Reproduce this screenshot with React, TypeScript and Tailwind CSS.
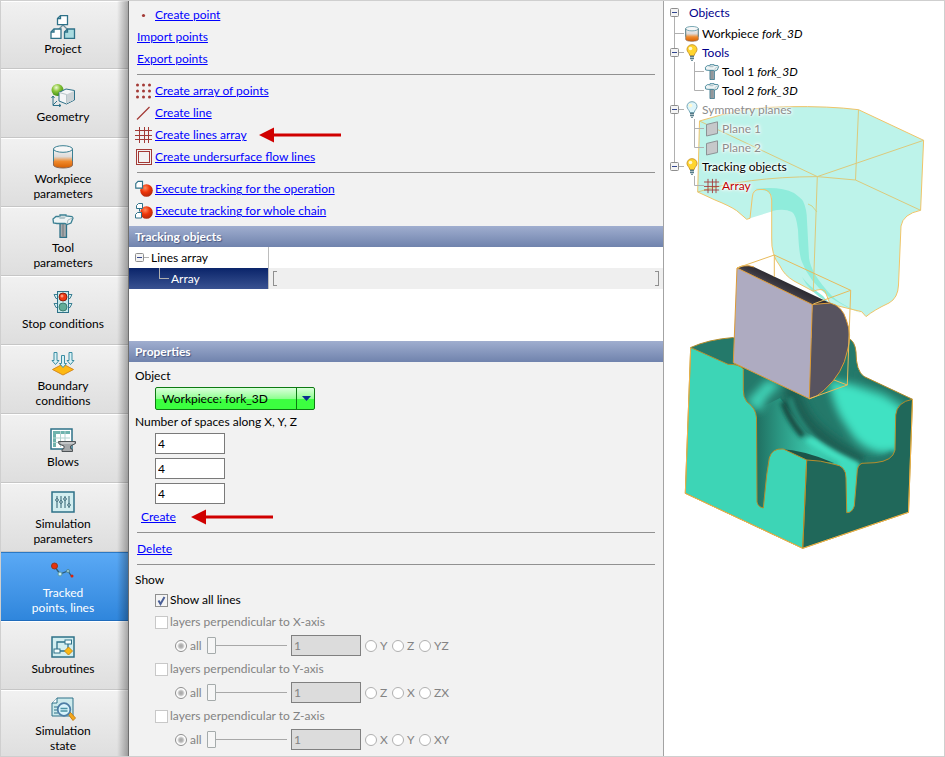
import { useState } from 'react'
import type { ReactNode } from 'react'

const PAGE = 'M1 3.5 4 .5h6v9H1z'

function ProjectIcon() {
  return (
    <svg width="26" height="24" viewBox="0 0 26 24" fill="none" stroke="#2e7188" strokeWidth="1.3">
      <path d="M13 10 8 15M13 10l5 5" stroke="#6d8f9b" />
      <path d="M7.5 3.5 10.500 .7h7v9h-10z" fill="#fff" />
      <path d="M10.500 .7v3h-3" />
      <path d="M1 17 4 14h7v9.300H1z" fill="#fff" />
      <path d="M4 14v3H1" />
      <path d="M14.500 17l3-3h7v9.300h-10z" fill="#a9dbe0" />
      <path d="M17.500 14v3h-3" />
    </svg>
  )
}

function GeometryIcon() {
  return (
    <svg width="24" height="24" viewBox="0 0 24 24" fill="none">
      <defs>
        <radialGradient id="geoBall" cx=".4" cy=".3" r=".7">
          <stop offset="0" stopColor="#f0fbd8" />
          <stop offset=".45" stopColor="#8cc63c" />
          <stop offset="1" stopColor="#3f8f13" />
        </radialGradient>
      </defs>
      <circle cx="6.500" cy="7" r="6" fill="url(#geoBall)" />
      <path d="M8 9.500 15 6l8.500 1.500V17l-8 4L8 18z" fill="#f4f6f7" stroke="#2e7188" />
      <path d="M15.500 11.500 23 8v9l-7.500 3.500z" fill="#ccd3d6" />
      <path d="M8 9.500l7.500 2V21" stroke="#b9c5c9" />
      <path d="M2 13v9.500h8M.5 15 2 13l1.500 2M8 21l2 1.500-2 1.500M2 22l4-4" stroke="#2e7188" />
    </svg>
  )
}

function CylinderIcon({ size = 24 }: { size?: number }) {
  return (
    <svg width={size} height={size} viewBox="0 0 24 24">
      <defs>
        <linearGradient id="cylBody" x1="0" y1="0" x2="0" y2="1">
          <stop offset="0" stopColor="#f4f4f4" />
          <stop offset=".4" stopColor="#dedad8" />
          <stop offset=".65" stopColor="#f08a2c" />
          <stop offset="1" stopColor="#d65f00" />
        </linearGradient>
      </defs>
      <path d="M2.500 4v16c0 4 19 4 19 0V4z" fill="url(#cylBody)" stroke="#8a6a58" />
      <path d="M2.500 16V4M21.500 16V4" stroke="#3b8093" />
      <ellipse cx="12" cy="4" rx="9.500" ry="3.300" fill="#f7f7f7" stroke="#3b8093" />
    </svg>
  )
}

function HammerIcon({ size = 24 }: { size?: number }) {
  return (
    <svg width={size} height={size} viewBox="0 0 24 24">
      <path d="M9 9h6.500v14.500H9z" fill="#a6a9ab" stroke="#2e7188" strokeWidth="1.300" />
      <path d="M12 10v13" stroke="#8a8f92" strokeWidth="2" />
      <path d="M2 5 5 2.500h4V1h6v1l6 .5 1 1.500-2 5-4 1.500-2-1H6L2.500 9z" fill="#eef4f5" stroke="#3b8093" strokeWidth="1.300" />
      <path d="M8 2.500h7l-1.500 2.500h-5z" fill="#b3c6cb" />
      <path d="M16 10l1-4 4.500-2" fill="none" stroke="#a9bcc1" />
    </svg>
  )
}

function TrafficIcon() {
  return (
    <svg width="24" height="24" viewBox="0 0 24 24">
      <path d="M6 4.500H3l2 4h1M6 13.500H3l2 4h1M18 4.500h3l-2 4h-1M18 13.500h3l-2 4h-1" fill="#d8eef0" stroke="#3b8093" />
      <rect x="6.500" y="1.500" width="11" height="21" fill="#c6e9ea" stroke="#2e7188" />
      <circle cx="12" cy="7" r="4" fill="#ee3a14" stroke="#8e2010" />
      <circle cx="11" cy="6" r="1.500" fill="#ff9b7c" />
      <circle cx="12" cy="17" r="4" fill="#62ad97" stroke="#3d7e71" />
    </svg>
  )
}

function BoundaryIcon() {
  return (
    <svg width="24" height="24" viewBox="0 0 24 24">
      <path d="M1.500 17.500 12 12l10.500 5.500L12 23z" fill="#fdb913" stroke="#d88a1c" />
      <g fill="#d9f1f5" stroke="#3b8da3">
        <path d="M3 .5h3v8h2L4.500 12.500 1 8.500h2z" />
        <path d="M18 .5h3v8h2l-3.500 4L16 8.500h2z" />
        <path d="M10.500 3.500h3v8h2L12 15.500l-3.500-4h2z" />
      </g>
    </svg>
  )
}

function BlowsIcon() {
  return (
    <svg width="26" height="24" viewBox="0 0 26 24">
      <rect x="1" y="1" width="21" height="20" fill="#fff" stroke="#2e7188" strokeWidth="1.500" />
      <path d="M3 3h17v3H3zM3 6h3v13H3z" fill="#6fb3ad" />
      <path d="M3 10h17M3 14.500h17M10.500 3v16M15 3v16" stroke="#b3d3d0" />
      <path d="M8.500 13.500h17v2l-5 2.500v2.500l2 1v2H12v-2l2-1V18l-5-2z" fill="#a5a8aa" stroke="#4e5356" />
      <path d="M11 15h13" stroke="#e2e4e5" />
    </svg>
  )
}

function SlidersIcon() {
  return (
    <svg width="24" height="22" viewBox="0 0 24 22">
      <rect x="1" y="1" width="22" height="20" fill="#d3eef0" stroke="#2e7188" strokeWidth="1.500" />
      <path d="M6 5v12M10 5v12M14 5v12M18 5v12" stroke="#2f6070" />
      <g fill="#e9fafa" stroke="#2f6070">
        <circle cx="6" cy="9" r="1.300" />
        <circle cx="10" cy="11" r="1.300" />
        <circle cx="14" cy="8" r="1.300" />
        <circle cx="18" cy="14" r="1.300" />
      </g>
    </svg>
  )
}

function TrackedIcon() {
  return (
    <svg width="24" height="24" viewBox="0 0 24 24">
      <path d="m4 8 5 7 8-3 4 6" fill="none" stroke="#2d5d78" strokeWidth="1.300" />
      <circle cx="3.500" cy="7" r="3" fill="#e8310c" stroke="#97361b" />
      <circle cx="9" cy="15" r="2" fill="#c9eef0" stroke="#5b98a4" />
      <circle cx="17" cy="12" r="1.500" fill="#a5d4dc" stroke="#4d8797" />
      <circle cx="21" cy="17" r="1.500" fill="#dd2208" />
    </svg>
  )
}

function SubroutinesIcon() {
  return (
    <svg width="24" height="22" viewBox="0 0 24 22">
      <rect x="1" y="1" width="22" height="20" fill="#d3eef0" stroke="#2e7188" strokeWidth="1.500" />
      <path d="M6 13V6h8M17 8v6M8 15h6" fill="none" stroke="#2e7188" strokeWidth="1.300" />
      <rect x="14" y="4" width="6.500" height="4" fill="#f4fdfd" stroke="#2e7188" />
      <rect x="3" y="13" width="6" height="4" fill="#f4fdfd" stroke="#2e7188" />
      <path d="m17.500 11 4 4-4 4-4-4z" fill="#fdb913" stroke="#c68a1a" />
    </svg>
  )
}

function StateIcon() {
  return (
    <svg width="26" height="24" viewBox="0 0 26 24">
      <path d="M2 6 7 1h16v18H2z" fill="#cdeaec" stroke="#2e7188" />
      <path d="M7 1v5H2" fill="#fff" stroke="#2e7188" />
      <path d="M4 10h4M4 13h3M4 16h4" stroke="#2e7188" />
      <path d="m18 17 2-2 5.500 6-2.500 2.500z" fill="#f5a81c" stroke="#c5801a" />
      <circle cx="14" cy="12.500" r="6.300" fill="#d8f3fb" stroke="#4d7da5" strokeWidth="1.800" />
      <path d="M10.500 11.500h7M10.500 14h7" stroke="#4a93a5" strokeWidth="1.500" />
    </svg>
  )
}

const steps: { label: string[]; icon: ReactNode; active?: boolean }[] = [
  { label: ['Project'], icon: <ProjectIcon /> },
  { label: ['Geometry'], icon: <GeometryIcon /> },
  { label: ['Workpiece', 'parameters'], icon: <CylinderIcon /> },
  { label: ['Tool', 'parameters'], icon: <HammerIcon /> },
  { label: ['Stop conditions'], icon: <TrafficIcon /> },
  { label: ['Boundary', 'conditions'], icon: <BoundaryIcon /> },
  { label: ['Blows'], icon: <BlowsIcon /> },
  { label: ['Simulation', 'parameters'], icon: <SlidersIcon /> },
  { label: ['Tracked', 'points, lines'], icon: <TrackedIcon />, active: true },
  { label: ['Subroutines'], icon: <SubroutinesIcon /> },
  { label: ['Simulation', 'state'], icon: <StateIcon /> },
]

function Sidebar() {
  return (
    <nav className="relative w-32 shrink-0 overflow-hidden">
      {steps.map((step) => (
        <button
          key={step.label.join(' ')}
          className={
            step.active
              ? 'flex h-[69px] w-full flex-col items-center justify-center gap-0.5 border-t border-b border-t-[#2a78c4] border-b-[#1f6cbc] bg-linear-to-b from-[#5aa9f5] to-[#2f86dc] pr-1 leading-[15px] text-white'
              : 'flex h-[69px] w-full flex-col items-center justify-center gap-0.5 border-t border-b border-t-white border-b-[#c6c6c6] bg-linear-to-b from-[#f1f1f1] to-[#dedede] pr-1 leading-[15px] first:h-[68px]'
          }
        >
          <span className="flex h-6 items-center">{step.icon}</span>
          <span>
            {step.label.map((line) => (
              <span key={line} className="block">{line}</span>
            ))}
          </span>
        </button>
      ))}
      <div className="pointer-events-none absolute inset-y-0 right-0 w-3 border-r border-[#6e6e6e] bg-linear-to-r from-black/0 to-black/30" />
    </nav>
  )
}

function GridIcon() {
  return (
    <svg width="18" height="18" viewBox="0 0 18 18" stroke="#a33a36">
      <path d="M4.500 1v16M9.500 1v16M13.500 1v16M0 4.500h17M0 9.500h17M0 13.500h17" />
    </svg>
  )
}

const actionIcons = {
  point: <circle cx="8.500" cy="9.500" r="1.600" fill="#a33a36" />,
  points: (
    <g fill="#a33a36">
      {[3, 9, 15].map((y) => [2.500, 8.500, 14.500].map((x) => <circle key={`${x}-${y}`} cx={x} cy={y} r="1.500" />))}
    </g>
  ),
  line: <path d="M2 15.500 14.500 3" stroke="#a33a36" strokeWidth="1.200" />,
  surface: (
    <g fill="none" stroke="#a33a36">
      <rect x="1.500" y="1.500" width="15" height="15" />
      <rect x="3.500" y="3.500" width="11" height="11" />
    </g>
  ),
}

function ActionIcon({ name }: { name: keyof typeof actionIcons }) {
  return <svg width="18" height="18" viewBox="0 0 18 18">{actionIcons[name]}</svg>
}

function ExecuteIcon({ chain }: { chain?: boolean }) {
  return (
    <svg width="18" height="18" viewBox="0 0 18 18">
      <defs>
        <radialGradient id="redBall" cx=".4" cy=".3" r=".7">
          <stop offset="0" stopColor="#ff8a5e" />
          <stop offset=".5" stopColor="#ee3508" />
          <stop offset="1" stopColor="#b32a0c" />
        </radialGradient>
      </defs>
      <circle cx="11.500" cy="10.500" r="6.300" fill="url(#redBall)" />
      {chain ? (
        <g fill="#fff" stroke="#2e7188">
          <path d="M1.500 3.500l2-2h4v5h-6zM.5 12.500l2-2h4v5.500h-6z" />
          <path d="M4.500 6.500v3" />
        </g>
      ) : (
        <path d={PAGE} transform="translate(0 1) scale(.75)" fill="#fff" stroke="#2e7188" strokeWidth="1.500" />
      )}
    </svg>
  )
}

function RedArrow() {
  return (
    <svg width="82" height="16" viewBox="0 0 82 16" fill="#d00000">
      <path d="M0 8 15 .5V6.500h67v3H15v6z" />
    </svg>
  )
}

function Action({ icon, children, arrow }: { icon?: ReactNode; children: ReactNode; arrow?: boolean }) {
  return (
    <div className={icon ? 'flex h-[22px] items-center gap-0.5 pl-1.5' : 'flex h-[22px] items-center pl-2'}>
      {icon}
      <a href="#" className="text-[#0000ff] underline">{children}</a>
      {arrow && <span className="ml-2.5"><RedArrow /></span>}
    </div>
  )
}

function Rule() {
  return <hr className="mx-2 mt-1 mb-[5px] border-[#919191]" />
}

function SectionTitle({ children }: { children: ReactNode }) {
  return (
    <h2 className="h-[21px] bg-linear-to-b from-[#a0aecf] to-[#7083ad] pl-1.5 leading-[21px] font-bold text-white [text-shadow:1px_1px_1px_#4a5a84]">
      {children}
    </h2>
  )
}

function Expander() {
  return (
    <svg width="9" height="9" viewBox="0 0 9 9" className="shrink-0">
      <rect x=".5" y=".5" width="8" height="8" rx="1" fill="#f4f4f4" stroke="#8e8e8e" />
      <path d="M2 4.500h5" stroke="#33478f" />
    </svg>
  )
}

function TrackingTable() {
  return (
    <div className="h-[94px] bg-white">
      <table className="w-full border-collapse">
        <tbody>
          <tr className="h-[21px]">
            <td className="w-[139px] border-r border-[#bdbdbd] p-0">
              <div className="flex items-center pl-1.5">
                <Expander />
                <span className="mr-0.5 h-px w-[5px] bg-[#b0b0b0]" />
                Lines array
              </div>
            </td>
            <td className="p-0" />
          </tr>
          <tr className="h-[21px]">
            <td className="border-r border-[#bdbdbd] bg-linear-to-b from-[#0a246a] to-[#3a5291] p-0 text-white">
              <div className="flex h-[21px] pl-[30px]">
                <span className="mr-0.5 h-[11px] w-2.5 border-b border-l border-[#b0b0b0]" />
                <span className="leading-[21px]">Array</span>
              </div>
            </td>
            <td className="bg-[#efefef] py-0 pr-1 pl-1">
              <div className="flex justify-between">
                <span className="h-[15px] w-1 border border-r-0 border-[#8f8f8f]" />
                <span className="h-[15px] w-1 border border-l-0 border-[#8f8f8f]" />
              </div>
            </td>
          </tr>
        </tbody>
      </table>
    </div>
  )
}

function ObjectSelect() {
  return (
    <div className="relative ml-5 h-[23px] w-40">
      <select
        id="object"
        className="h-full w-full appearance-none rounded-[2px] border border-[#0d7a12] bg-linear-to-b from-[#d9ffda] from-0% via-[#8eff90] via-50% to-[#3cff40] to-55% pl-1.5"
      >
        <option>Workpiece: fork_3D</option>
      </select>
      <span className="pointer-events-none absolute inset-y-0 right-0 flex w-[19px] items-center justify-center border-l border-[#0d7a12]">
        <svg width="9" height="5" viewBox="0 0 9 5" fill="#0c2f8f"><path d="M0 0h9L4.500 5z" /></svg>
      </span>
    </div>
  )
}

function Radio({ name, label, checked }: { name: string; label: string; checked?: boolean }) {
  return (
    <label className="flex items-center gap-[3px]">
      <input
        type="radio"
        name={name}
        disabled
        defaultChecked={checked}
        className="size-3 appearance-none rounded-full border border-[#b0b0b0] bg-white checked:border-[#8e8e8e] checked:bg-[radial-gradient(circle,#a6a6a6_0,#b8b8b8_2px,#fff_4px)]"
      />
      {label}
    </label>
  )
}

function AxisLayers({ axis, options }: { axis: string; options: string[] }) {
  return (
    <fieldset className="text-[#838383]">
      <label className="flex h-5 items-center gap-0.5 pl-5">
        <input type="checkbox" disabled className="size-[13px] appearance-none border border-[#c8c8c8] bg-white" />
        layers perpendicular to {axis}-axis
      </label>
      <div className="flex h-[27px] items-center pl-10">
        <div className="w-8">
          <Radio name={`mode-${axis}`} label="all" checked />
        </div>
        <input
          type="range"
          disabled
          min={1}
          max={4}
          defaultValue={1}
          aria-label={`${axis} layer`}
          className="h-[19px] w-20 appearance-none bg-[linear-gradient(#a8a8a8,#a8a8a8)] bg-[length:100%_1px] bg-center bg-no-repeat [&::-webkit-slider-thumb]:h-[17px] [&::-webkit-slider-thumb]:w-[9px] [&::-webkit-slider-thumb]:appearance-none [&::-webkit-slider-thumb]:rounded-[1px] [&::-webkit-slider-thumb]:border [&::-webkit-slider-thumb]:border-[#a5abab] [&::-webkit-slider-thumb]:bg-[#f6f6f6]"
        />
        <input
          type="text"
          disabled
          defaultValue="1"
          aria-label={`${axis} layer number`}
          className="mr-1 ml-1 h-[21px] w-[70px] border border-[#808080] bg-[#dcdcdc] px-0.5"
        />
        <div className="grid grid-cols-[27px_27px_auto]">
          {options.map((option) => (
            <Radio key={option} name={`plane-${axis}`} label={option} />
          ))}
        </div>
      </div>
    </fieldset>
  )
}

function MainPanel() {
  const [showAll, setShowAll] = useState(true)

  return (
    <main className="w-[535px] shrink-0 border-r border-[#a3a3a3] bg-[#f2f2f2]">
      <div className="pt-[3px] pb-1">
        <Action icon={<ActionIcon name="point" />}>Create point</Action>
        <Action>Import points</Action>
        <Action>Export points</Action>
        <Rule />
        <Action icon={<ActionIcon name="points" />}>Create array of points</Action>
        <Action icon={<ActionIcon name="line" />}>Create line</Action>
        <Action icon={<GridIcon />} arrow>Create lines array</Action>
        <Action icon={<ActionIcon name="surface" />}>Create undersurface flow lines</Action>
        <Rule />
        <Action icon={<ExecuteIcon />}>Execute tracking for the operation</Action>
        <Action icon={<ExecuteIcon chain />}>Execute tracking for whole chain</Action>
      </div>

      <SectionTitle>Tracking objects</SectionTitle>
      <TrackingTable />

      <SectionTitle>Properties</SectionTitle>
      <div className="pt-1">
        <label htmlFor="object" className="block h-[21px] pl-1.5 leading-5">Object</label>
        <div className="pl-1.5"><ObjectSelect /></div>
        <div className="h-[23px] pl-1.5 leading-6">Number of spaces along X, Y, Z</div>
        <div className="flex flex-col items-start gap-1 pl-[26px]">
          {['X', 'Y', 'Z'].map((axis) => (
            <input
              key={axis}
              type="text"
              defaultValue="4"
              aria-label={`Spaces along ${axis}`}
              className="h-[21px] w-[70px] border border-[#7a7a7a] bg-white px-0.5"
            />
          ))}
        </div>
        <div className="flex h-6 items-center gap-[15px] pt-0.5 pl-3">
          <a href="#" className="text-[#0000ff] underline">Create</a>
          <RedArrow />
        </div>
        <Rule />
        <Action>Delete</Action>
        <Rule />
        <div className="h-5 pl-1.5 leading-5">Show</div>
        <div className="pl-1.5">
          <label className="mb-0.5 flex h-5 items-center gap-0.5 pl-5">
            <span className="relative flex">
              <input
                type="checkbox"
                checked={showAll}
                onChange={(e) => setShowAll(e.target.checked)}
                className="size-[13px] appearance-none border border-[#8e8f8f] bg-[#f4f4f4]"
              />
              {showAll && (
                <svg width="13" height="13" viewBox="0 0 13 13" className="pointer-events-none absolute inset-0">
                  <path d="m3.500 6.500 2 3.500L9.500 3" fill="none" stroke="#4a5f97" strokeWidth="2" />
                </svg>
              )}
            </span>
            Show all lines
          </label>
          <AxisLayers axis="X" options={['Y', 'Z', 'YZ']} />
          <AxisLayers axis="Y" options={['Z', 'X', 'ZX']} />
          <AxisLayers axis="Z" options={['X', 'Y', 'XY']} />
        </div>
      </div>
    </main>
  )
}

const LOWER_FRONT =
  'M690.700 347.500 728 364.300 Q739 364 743.300 369 V390 Q743 397 747 402 Q756 408 756.500 418 L757 502 Q758 507 763.300 508 L766.700 475 L769.300 458 Q772 448 783.300 449 L806.700 460 L802.700 548.300 L685.300 493.300z'
const LOWER_SIDE =
  'M806.700 460 L802.700 548.300 L908.500 512.300 L912.500 399.300 Q897 402 895.700 415 L895 450 Q893 461 875 462.700 L862 463.300 Q857 465 857 474 L854.300 506 Q852 513 846.700 512.700 L846 478 Q846 466 835 464.500 Q820 460 806.700 460z'
const LOWER_ALL =
  'M690.700 347.500 Q708 339.500 733.300 337.500 L848.300 338.300 Q855 341 856 352 Q856 371 864 376.500 L912.500 399.300 L908.500 512.300 L802.700 548.300 L685.300 493.300z'
const UPPER =
  'M699.500 121 Q745 106.500 787 106.700 Q830 106 858.500 109.700 L923.600 140.300 L920.600 210.300 Q903 214 901 226 L898.500 285 Q898 298 889 303 Q874 310 866 316.600 L861.700 311.700 L830 304 L825 291 Q821 288 813.300 291.300 L794 281 Q784 275 780 266 Q771 255 771.700 238 V211.500 L750 218.300 L746.700 219.300 L736.700 210.700 Q730 206 715 200 L697.700 192z'

function Model() {
  return (
    <svg
      width="281"
      height="756"
      viewBox="664 1 281 756"
      className="absolute top-0 left-0"
      role="img"
      aria-label="Workpiece between two dies"
    >
      <defs>
        <clipPath id="lowerClip"><path d={LOWER_ALL} /></clipPath>
        <filter id="soft" x="-30%" y="-30%" width="160%" height="160%"><feGaussianBlur stdDeviation="4" /></filter>
        <filter id="softer" x="-40%" y="-40%" width="180%" height="180%"><feGaussianBlur stdDeviation="2" /></filter>
        <linearGradient id="barTop" x1="780" y1="280" x2="774" y2="292" gradientUnits="userSpaceOnUse">
          <stop offset="0" stopColor="#2f2d33" />
          <stop offset=".4" stopColor="#3a3840" />
          <stop offset="1" stopColor="#6c6774" />
        </linearGradient>
        <linearGradient id="cavity" x1="755" y1="0" x2="812" y2="0" gradientUnits="userSpaceOnUse">
          <stop offset="0" stopColor="#1f6d5f" />
          <stop offset=".4" stopColor="#2a9480" />
          <stop offset="1" stopColor="#3bc9ad" />
        </linearGradient>
      </defs>

      {/* lower die cavity */}
      <path d={LOWER_ALL} fill="#24796a" />
      <g clipPath="url(#lowerClip)">
        <path d="M756 410 780 398 806 432 860 464 V515 H846 L835 464 806 460 783 449 766 475 763 508H757z" fill="url(#cavity)" />
        <g filter="url(#soft)">
          <path d="m746 402 21-22 14 4-16 16-4 12z" fill="#40d2b6" />
          <path d="m829 380 22 4 32 11 20 12-2 44-20 2q-22-4-34-26-14-18-18-47z" fill="#41e2c3" />
          <path d="M791 384q6 32 26 49 20 18 46 30" fill="none" stroke="#1b5e52" strokeWidth="16" />
          <path d="m858 370 56 27-6 5-48-21z" fill="#237565" />
        </g>
        <g filter="url(#softer)">
          <path d="M808 438q16 14 50 29" fill="none" stroke="#42dfc0" strokeWidth="9" />
          <path d="M783 402q6 18 20 34" fill="none" stroke="#17493f" strokeWidth="6" />
          <path d="M790 398q6 22 24 40" fill="none" stroke="#2b9a85" strokeWidth="3" />
          <path d="m838 462 10-2 11 5-3 48h-11z" fill="#41dcbe" />
          <path d="M864 461q22 1 29-8" fill="none" stroke="#237869" strokeWidth="5" />
        </g>
      </g>
      <path d="M780 449q24 1 54 14l-27-3z" fill="#1a5549" />
      <path d={LOWER_FRONT} fill="#3dd5b6" />
      <path d={LOWER_SIDE} fill="#20685a" />
      <g fill="none" stroke="#b58d2c" strokeWidth="1">
        <path d={LOWER_FRONT} />
        <path d={LOWER_SIDE} />
        <path d="M690.700 347.500Q708 339.500 733.300 337.500M848.300 338.300Q855 341 856 352 856 371 864 376.500L912.500 399.300" />
      </g>
      <path d="M690.700 347.500 685.300 493.300 802.700 548.300 908.500 512.300 912.500 399.300" fill="none" stroke="#eeb54c" />

      {/* upper die */}
      <path d={UPPER} fill="#bdf3ea" />
      <path
        d="M755 189q25-3 39 4 8 6 9 8 4 8 4 20l2 37q2 16 23 38 9 9 34 19-20-7-38-19-19-15-26-34-3-6-4-32-2-16-6-18-8-4-20-1v-12q1-9-17-10z"
        fill="#8fecdb"
      />
      <path d="M802 277q7 9 21 19l6 7q-20-11-27-26z" fill="#8fecdb" />
      <g fill="none" stroke="#f0c468" strokeWidth="1">
        <path d="M771.700 211.500V238Q771 255 780 266 784 275 794 281L813.300 291.300Q821 288 825 291L830 304 861.700 311.700 866 316.600Q874 310 889 303 898 298 898.500 285L901 226Q903 214 920.600 210.300L923.600 140.300 858.500 109.700Q830 106 787 106.700 745 106.500 699.500 121L697.700 192 715 200Q730 206 736.700 210.700L746.700 219.300 750 218.300 752.300 197Q753 189 760 189.500 771 188 771.700 200V212" />
        <path d="M699.500 121 817.300 176.600 923.600 140.300M858.500 109.700 855.500 180 920.600 210.300M697.700 192Q745 177 817.300 176.600L855.500 180M817.300 176.600 813.300 291.300" stroke="#dcca7c" />
        <path d="m808 204 4 2 5 6" stroke="#cdd38b" />
      </g>

      {/* workpiece */}
      <path d="m737 268 5-2q8-1 12 1l76 36-18 2z" fill="url(#barTop)" />
      <path d="m812.300 304.500 18-1.500q12 3 16 17 6 15 1 31-4 22-23 39-7 7-15 9z" fill="#57535f" />
      <path d="m737 268 75.300 36.500-3 94.200-76-36z" fill="#aeabc1" />
      <g fill="none" stroke="#dd9a35" strokeWidth="1">
        <path d="m737 268 75.300 36.500-3 94.200-76-36z" />
        <path d="m812.300 304.500 18-1.500q12 3 16 17 6 15 1 31-4 22-23 39-7 7-15 9M737 268l5-2q8-1 12 1" />
      </g>
      <path
        d="M737 268 774.300 255 850.700 290.300 813.300 304M774.300 255v22M850.700 290.300 847.300 385 809.300 398.700M847.300 385 834 380"
        fill="none"
        stroke="#e8bb5c"
      />
    </svg>
  )
}

function BulbIcon({ off }: { off?: boolean }) {
  return (
    <svg width="12" height="17" viewBox="0 0 12 17" className="shrink-0">
      <path
        d="M6 .7C2.800 .7 1 3 1 5.500c0 2.500 2.500 3.500 2.800 6h4.400C8.500 9 11 8 11 5.500 11 3 9.200 .7 6 .7z"
        fill={off ? '#ddf5fb' : '#ffd52e'}
        stroke={off ? '#79a9b8' : '#cf9b2c'}
      />
      <circle cx="4.500" cy="4.500" r="1.800" fill="#fff8d0" />
      <path d="M4 12.500h4M4 14.500h4" stroke="#557b88" strokeWidth="1.500" />
      <path d="M5 16.300h2" stroke="#557b88" />
    </svg>
  )
}

function PlaneIcon() {
  return (
    <svg width="14" height="16" viewBox="0 0 14 16" className="shrink-0">
      <path d="M1.500 3.500 12.500 .8v11.700L1.500 15z" fill="#c6c8ca" stroke="#8c9295" />
    </svg>
  )
}

const HALO = '[text-shadow:0_0_2px_#fff,0_0_3px_#fff,0_0_4px_#fff,0_0_5px_#fff]'

function Node({ icon, children, level = 1 }: { icon: ReactNode; children: ReactNode; level?: 1 | 2 }) {
  return (
    <li className={level === 1 ? 'flex h-[19px] items-center pl-5' : 'flex h-[19px] items-center pl-10'}>
      <span className="mr-0.5 flex w-4 justify-center">{icon}</span>
      {children}
    </li>
  )
}

function Group({ icon, children }: { icon: ReactNode; children: ReactNode }) {
  return (
    <li className="flex h-[19px] items-center pl-1.5">
      <Expander />
      <span className="w-[5px] border-t border-[#b0b0b0]" />
      <span className="mr-0.5 flex w-4 justify-center">{icon}</span>
      {children}
    </li>
  )
}

function ObjectTree() {
  return (
    <div className={`relative ${HALO}`}>
      <svg width="60" height="200" viewBox="0 0 60 200" className="absolute top-0 left-0" stroke="#b0b0b0" fill="none">
        <path d="M10.500 16v146M10.500 32.500H20M30.500 61v28.500M30.500 70.500H40M30.500 89.500H40M30.500 118v28.500M30.500 127.500H40M30.500 146.500H40M30.500 175v9.500H40" />
      </svg>
      <ul className="relative">
        <li className="flex h-[23px] items-center gap-2.5 pl-1.5 text-[#00008b]">
          <Expander />
          Objects
        </li>
        <Node icon={<CylinderIcon size={16} />}>
          Workpiece&nbsp;<i>fork_3D</i>
        </Node>
        <Group icon={<BulbIcon />}><span className="text-[#00008b]">Tools</span></Group>
        <Node level={2} icon={<HammerIcon size={16} />}>Tool 1&nbsp;<i>fork_3D</i></Node>
        <Node level={2} icon={<HammerIcon size={16} />}>Tool 2&nbsp;<i>fork_3D</i></Node>
        <Group icon={<BulbIcon off />}><span className="text-[#8c8c8c]">Symmetry planes</span></Group>
        <Node level={2} icon={<PlaneIcon />}><span className="text-[#8c8c8c]">Plane 1</span></Node>
        <Node level={2} icon={<PlaneIcon />}><span className="text-[#8c8c8c]">Plane 2</span></Node>
        <Group icon={<BulbIcon />}>Tracking objects</Group>
        <Node level={2} icon={<GridIcon />}><span className="text-[#c00000]">Array</span></Node>
      </ul>
    </div>
  )
}

export default function App() {
  return (
    <div className="flex h-screen overflow-hidden border border-[#cfcfcf] bg-white font-[Lato,sans-serif] text-xs leading-4 text-black">
      <Sidebar />
      <MainPanel />
      <section className="relative flex-1 overflow-hidden bg-white">
        <Model />
        <ObjectTree />
      </section>
    </div>
  )
}
